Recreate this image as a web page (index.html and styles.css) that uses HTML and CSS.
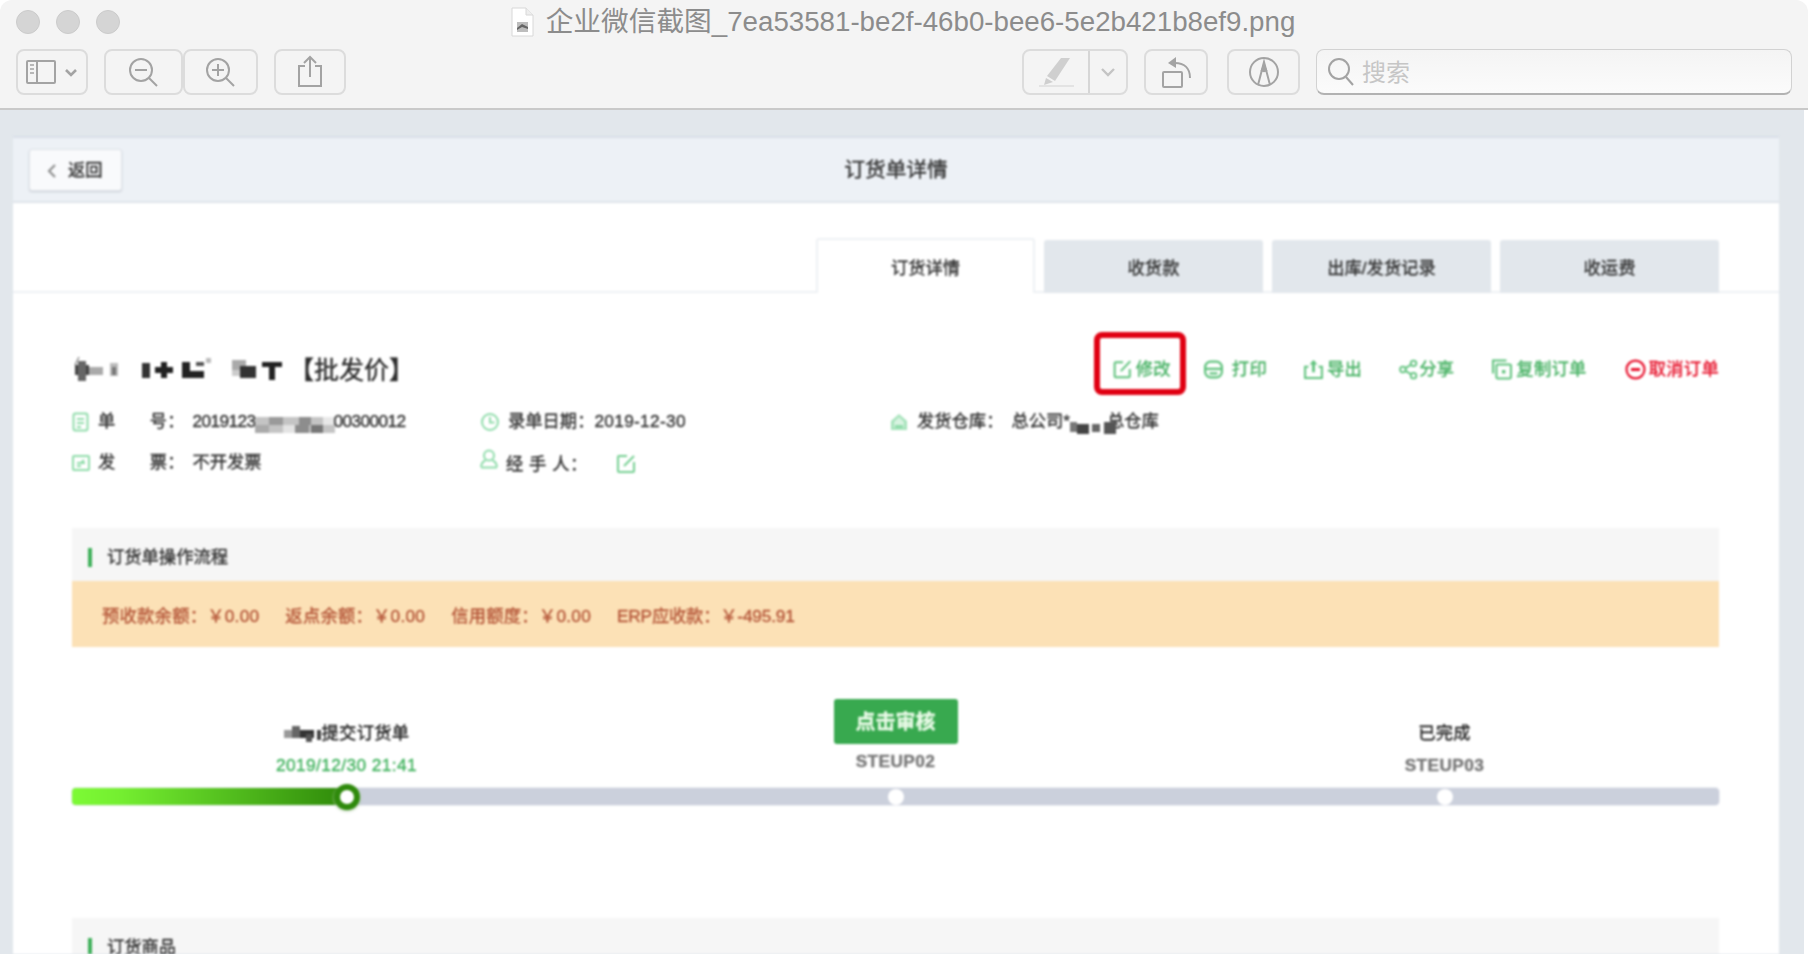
FILE: index.html
```html
<!DOCTYPE html>
<html lang="zh-CN">
<head>
<meta charset="utf-8">
<title>订货单详情</title>
<link rel="stylesheet" href="styles.css">
</head>
<body>
<div class="window">
  <header class="titlebar">
    <div class="title-row">
      <div class="lights"><i class="light"></i><i class="light"></i><i class="light"></i></div>
      <div class="doc-title">
        <svg class="doc-icon" width="23" height="30" viewBox="0 0 23 30"><path d="M1 1h14l7 7v21H1z" fill="#fff" stroke="#d8d8d8"/><path d="M15 1v7h7" fill="#eee" stroke="#d8d8d8"/><path d="M6 15h11v10H6z" fill="#bdbdbd"/><path d="M6 21l5-4 6 3v2l-6-2-5 3z" fill="#666"/></svg>
        <span>企业微信截图_7ea53581-be2f-46b0-bee6-5e2b421b8ef9.png</span>
      </div>
      <div></div>
    </div>
    <div class="toolbar">
      <div class="tb-btn w72">
        <svg width="62" height="46" viewBox="0 0 62 46" fill="none" stroke="#a3a3a3" stroke-width="2"><rect x="6" y="12" width="28" height="22" rx="1"/><path d="M16 12v22"/><path d="M9 16h4M9 20h4M9 24h4" stroke-width="1.5"/><path d="M45 21l5 5 5-5" stroke-width="2.6"/></svg>
      </div>
      <div class="tb-zoom">
        <div class="tb-btn w79">
          <svg width="40" height="40" viewBox="0 0 40 40" fill="none" stroke="#a3a3a3" stroke-width="2"><circle cx="17" cy="18" r="11"/><path d="M11 18h12M25 26l8 8"/></svg>
        </div>
        <div class="tb-btn w75">
          <svg width="40" height="40" viewBox="0 0 40 40" fill="none" stroke="#a3a3a3" stroke-width="2"><circle cx="17" cy="18" r="11"/><path d="M11 18h12M17 12v12M25 26l8 8"/></svg>
        </div>
      </div>
      <div class="tb-btn w72">
        <svg width="30" height="34" viewBox="0 0 30 34" fill="none" stroke="#a3a3a3" stroke-width="2"><path d="M10 11H4v20h22V11h-6"/><path d="M15 22V2M9 8l6-6 6 6"/></svg>
      </div>
      <div class="tb-right">
        <div class="tb-btn tb-pen">
          <span class="pen-main">
            <svg width="40" height="36" viewBox="0 0 40 36"><path d="M25 4h9L19 27l-8-5z" fill="#cfcfcf"/><path d="M10 24l7 4-9 3z" fill="#cfcfcf"/><rect x="3" y="31" width="35" height="2" fill="#e3e3e3"/></svg>
          </span>
          <span class="pen-arrow">
            <svg width="18" height="12" viewBox="0 0 18 12" fill="none" stroke="#c4c4c4" stroke-width="2.4"><path d="M3 3l6 6 6-6"/></svg>
          </span>
        </div>
        <div class="tb-btn w64">
          <svg width="34" height="36" viewBox="0 0 34 36" fill="none" stroke="#a3a3a3" stroke-width="2"><rect x="4" y="18" width="19" height="15" rx="1"/><path d="M31 24c0-10-6-15-15-15"/><path d="M17 3l-8 6 8 5z" fill="#a3a3a3" stroke="none"/></svg>
        </div>
        <div class="tb-btn w73">
          <svg width="34" height="34" viewBox="0 0 34 34" fill="none" stroke="#a3a3a3" stroke-width="2"><circle cx="17" cy="17" r="14"/><path d="M11 30l6-23 6 23"/><path d="M13.500 16l3.500-9 3.500 9c-2 1.500-5 1.500-7 0z" fill="#a3a3a3" stroke="none"/></svg>
        </div>
        <div class="search">
          <svg width="30" height="34" viewBox="0 0 30 34" fill="none" stroke="#a3a3a3" stroke-width="2"><circle cx="13" cy="14" r="10"/><path d="M20 22l7 8"/></svg>
          <span>搜索</span>
        </div>
      </div>
    </div>
  </header>

  <main class="content">
    <div class="panel">
      <div class="panel-head">
        <div><button class="back"><svg width="10" height="16" viewBox="0 0 10 16" fill="none" stroke="#8a8a8a" stroke-width="2"><path d="M8 2L2 8l6 6"/></svg><span>返回</span></button></div>
        <h1 class="panel-title">订货单详情</h1>
        <div></div>
      </div>

      <nav class="tabs">
        <a class="tab active">订货详情</a>
        <a class="tab">收货款</a>
        <a class="tab">出库/发货记录</a>
        <a class="tab">收运费</a>
      </nav>

      <div class="body">
        <div class="order-head">
          <h2 class="customer">
            <svg class="mosaic-title" width="217" height="26" viewBox="0 0 217 26">
              <path d="M3 8L7 0" stroke="#555" fill="none"/><rect x="3" y="8" width="14" height="10" fill="#444"/><rect x="6" y="4" width="8" height="20" fill="#666"/><rect x="17" y="10" width="14" height="8" fill="#aaa"/>
              <rect x="38" y="6" width="8" height="13" fill="#bbb"/><rect x="40" y="10" width="4" height="8" fill="#777"/>
              <rect x="70" y="6" width="8" height="15" fill="#333"/>
              <rect x="83" y="10" width="18" height="6" fill="#222"/><rect x="89" y="5" width="6" height="16" fill="#222"/>
              <rect x="110" y="5" width="8" height="16" fill="#222"/><rect x="118" y="14" width="14" height="7" fill="#222"/><rect x="124" y="5" width="8" height="4" fill="#555"/>
              <rect x="134" y="1" width="5" height="5" fill="#bbb"/>
              <rect x="160" y="3" width="14" height="10" fill="#aaa"/><rect x="168" y="9" width="16" height="12" fill="#333"/><rect x="160" y="13" width="8" height="6" fill="#ccc"/>
              <rect x="190" y="5" width="20" height="5" fill="#222"/><rect x="197" y="5" width="6" height="18" fill="#222"/>
            </svg>
            <span>【批发价】</span>
          </h2>
          <div class="actions">
            <a class="action edit">
              <svg class="ico" width="19" height="19" viewBox="0 0 19 19" fill="none" stroke="#5fc27c" stroke-width="1.8"><path d="M10 3H3.500a1 1 0 0 0-1 1v11.500a1 1 0 0 0 1 1H15a1 1 0 0 0 1-1V9"/><path d="M8 11l8.500-9"/></svg>
              <span>修改</span><i class="annot"></i>
            </a>
            <a class="action print">
              <svg class="ico" width="19" height="19" viewBox="0 0 19 19" fill="none" stroke="#5fc27c" stroke-width="2"><rect x="2" y="2.500" width="15" height="14" rx="5"/><path d="M2 9h15M6 13h7"/></svg>
              <span>打印</span>
            </a>
            <a class="action">
              <svg class="ico" width="19" height="19" viewBox="0 0 19 19" fill="none" stroke="#5fc27c" stroke-width="1.800"><path d="M5 7H2v10h15V7h-3"/><path d="M9.500 12V2" stroke-width="2.500"/><path d="M6 5l3.500-4 3.500 4z" fill="#5fc27c" stroke="none"/></svg>
              <span>导出</span>
            </a>
            <a class="action share">
              <svg class="ico" width="17" height="19" viewBox="0 0 17 19" fill="none" stroke="#5fc27c" stroke-width="1.600"><circle cx="3.500" cy="9.500" r="2.500"/><circle cx="13" cy="4" r="2.500"/><circle cx="13" cy="15" r="2.500"/><path d="M5.500 8.500L11 5M5.500 10.500L11 14"/></svg>
              <span>分享</span>
            </a>
            <a class="action copy">
              <svg class="ico" width="20" height="19" viewBox="0 0 20 19" fill="none" stroke="#5fc27c" stroke-width="1.800"><path d="M2 13V1.500h12"/><rect x="5" y="5" width="13" height="12.500" rx="1"/><rect x="10" y="10" width="3" height="3" fill="#5fc27c" stroke="none"/></svg>
              <span>复制订单</span>
            </a>
            <a class="action danger">
              <svg class="ico" width="19" height="19" viewBox="0 0 19 19" fill="none" stroke="#e8112d" stroke-width="2"><circle cx="9.500" cy="9.500" r="8"/><path d="M5.500 9.500h8" stroke-width="2.600"/></svg>
              <span>取消订单</span>
            </a>
          </div>
        </div>

        <div class="info">
          <div class="info-item">
            <svg class="info-ico" width="18" height="20" viewBox="0 0 18 20" fill="none" stroke="#8fdcaa" stroke-width="2"><rect x="1.500" y="1.500" width="14" height="17" rx="2"/><path d="M5 7h7M5 11h7M5 15h4"/></svg>
            <span class="label gap">单　　号：</span>
            <span class="value tight">2019123<svg class="mosaic-num" width="80" height="16" viewBox="0 0 80 16"><rect width="80" height="16" fill="#c4c4c4"/><rect x="0" y="8" width="14" height="8" fill="#aaa"/><rect x="14" y="0" width="14" height="8" fill="#9a9a9a"/><rect x="28" y="8" width="12" height="8" fill="#e4e4e4"/><rect x="40" y="8" width="14" height="8" fill="#8d8d8d"/><rect x="44" y="0" width="12" height="8" fill="#8d8d8d"/><rect x="56" y="8" width="12" height="8" fill="#777"/><rect x="68" y="0" width="12" height="8" fill="#e8e8e8"/></svg>00300012</span>
          </div>
          <div class="info-item">
            <svg class="info-ico" width="20" height="20" viewBox="0 0 20 20" fill="none" stroke="#8fdcaa" stroke-width="2"><circle cx="10" cy="10" r="8"/><path d="M10 5v5.500h4.500"/></svg>
            <span class="label">录单日期：</span>
            <span class="value date">2019-12-30</span>
          </div>
          <div class="info-item">
            <svg class="info-ico" width="20" height="20" viewBox="0 0 20 20"><path d="M10 2l8 7v9H2V9z" fill="#a6e3bb"/><path d="M10 5l5 5v6H5v-6z" fill="#d8f3e1"/><path d="M6 13h8v3H6z" fill="#8fdcaa"/></svg>
            <span class="label gap">发货仓库：</span>
            <span class="value">总公司*<svg class="mosaic-wh" width="48" height="18" viewBox="0 0 48 18"><rect x="0" y="6" width="7" height="10" fill="#777"/><rect x="7" y="8" width="12" height="10" fill="#444"/><rect x="22" y="8" width="8" height="8" fill="#666"/><rect x="34" y="6" width="12" height="12" fill="#555"/></svg>总仓库</span>
          </div>
          <div class="info-item">
            <svg class="info-ico" width="18" height="20" viewBox="0 0 18 20" fill="none" stroke="#8fdcaa" stroke-width="2"><rect x="1" y="3" width="16" height="14" rx="1"/><path d="M5 10h8M5 13h4M12 7l-3 3"/></svg>
            <span class="label gap">发　　票：</span>
            <span class="value">不开发票</span>
          </div>
          <div class="info-item">
            <svg class="info-ico lifted" width="18" height="20" viewBox="0 0 18 20" fill="none" stroke="#8fdcaa" stroke-width="2"><path d="M1 18c.5-4 3-6 4.500-6.500M17 18c-.5-4-3-6-4.500-6.500"/><circle cx="9" cy="6.500" r="5"/><path d="M1 18.500h16"/></svg>
            <span class="label wide">经 手 人：</span>
            <svg class="handler-edit" width="20" height="20" viewBox="0 0 20 20" fill="none" stroke="#74cf91" stroke-width="2"><path d="M11 2H3a1 1 0 0 0-1 1v14a1 1 0 0 0 1 1h14a1 1 0 0 0 1-1V8"/><path d="M8 12l10-10"/></svg>
          </div>
          <div></div>
        </div>

        <section class="section-head"><i class="tick"></i>订货单操作流程</section>
        <div class="balances">
          <span>预收款余额：￥0.00</span>
          <span>返点余额：￥0.00</span>
          <span>信用额度：￥0.00</span>
          <span class="erp">ERP应收款：￥-495.91</span>
        </div>

        <div class="steps">
          <div class="step">
            <div class="step-name"><svg class="mosaic-step" width="38" height="18" viewBox="0 0 38 18"><rect x="0" y="6" width="10" height="8" fill="#999"/><rect x="8" y="2" width="8" height="12" fill="#666"/><rect x="16" y="6" width="14" height="8" fill="#333"/><rect x="22" y="10" width="6" height="8" fill="#555"/><rect x="33" y="6" width="4" height="10" fill="#444"/></svg>提交订货单</div>
            <div class="step-date">2019/12/30 21:41</div>
          </div>
          <div class="step middle">
            <button class="audit">点击审核</button>
            <div class="step-code">STEUP02</div>
          </div>
          <div class="step">
            <div class="step-name">已完成</div>
            <div class="step-code">STEUP03</div>
          </div>
        </div>
        <div class="track">
          <div class="fill"></div>
          <div class="node"><i class="thumb"></i></div>
          <div class="node"><i class="dot"></i></div>
          <div class="node"><i class="dot"></i></div>
        </div>

        <section class="section-head goods"><i class="tick"></i>订货商品</section>
      </div>
    </div>
  </main>
</div>
</body>
</html>
```
FILE: styles.css
```css
* { box-sizing: border-box; }
html, body { margin: 0; height: 100%; background: #fff; overflow: hidden; }
body { font-family: "Liberation Sans", "Noto Sans CJK SC", sans-serif; color: #333; }
.window { width: 1808px; height: 954px; overflow: hidden; display: flex; flex-direction: column; }

.titlebar { flex: none; height: 110px; background: #f4f4f4; border-bottom: 2px solid #c9c9c9; border-radius: 12px 12px 0 0; }
.title-row { height: 44px; display: grid; grid-template-columns: 1fr auto 1fr; align-items: center; padding-left: 16px; }
.lights { display: flex; gap: 16px; }
.light { width: 24px; height: 24px; border-radius: 50%; background: #d5d5d5; border: 1px solid #cbcbcb; }
.doc-title { display: flex; align-items: center; gap: 12px; padding-right: 18px; font-size: 27.700px; line-height: 40px; color: #8c8c8c; }
.doc-icon { flex: none; }
.toolbar { display: flex; height: 46px; margin-top: 5px; padding: 0 16px; gap: 16px; }
.tb-btn { height: 46px; display: flex; align-items: center; justify-content: center; border: 2px solid #dcdcdc; border-radius: 8px; background: #f4f4f4; }
.w72 { width: 72px; }
.w79 { width: 79px; }
.w75 { width: 75px; }
.w64 { width: 64px; margin-right: 3px; }
.w73 { width: 73px; }
.tb-zoom { display: flex; }
.tb-right { margin-left: auto; display: flex; gap: 16px; }
.tb-pen { width: 106px; justify-content: flex-start; }
.pen-main { width: 66px; height: 42px; display: flex; align-items: center; justify-content: center; border-right: 2px solid #d6d6d6; }
.pen-arrow { flex: 1; display: flex; justify-content: center; }
.search { width: 476px; height: 46px; display: flex; align-items: center; gap: 6px; padding-left: 9px; border: 1px solid #d2d2d2; border-bottom: 2px solid #b2b2b2; border-radius: 8px; background: linear-gradient(#f4f4f4, #fbfbfb); font-size: 24px; color: #c6c6c6; }
.search span { margin-top: -2px; }

.content { flex: 1; min-height: 0; margin-right: 4px; background: #e2e7ec; padding: 26px 25px 0 13px; }
.panel { height: 100%; background: #fff; filter: blur(0.8px); overflow: hidden; font-size: 17.300px; line-height: 1.2; -webkit-text-stroke: 0.35px; }
.panel-head { height: 67px; display: grid; grid-template-columns: 1fr auto 1fr; align-items: center; padding: 0 16px; background: #edf1f6; border-top: 2px solid #d9dfe8; border-bottom: 2px solid #dfe4ea; }
.back { width: 93px; height: 42px; display: flex; align-items: center; gap: 11px; padding: 2px 0 0 17px; background: #f9fafc; border: 1px solid #dfe3e8; box-shadow: 0 1px 2px #c9ced6; border-radius: 3px; font: inherit; color: #333; }
.panel-title { margin: 0; padding-top: 2px; font-size: 20.700px; font-weight: 400; color: #333; }

.tabs { height: 90px; display: flex; justify-content: flex-end; align-items: flex-end; gap: 9px; padding-right: 60px; border-bottom: 2px solid #eef1f4; }
.tab { width: 219px; height: 53px; margin-bottom: -2px; padding-top: 3px; display: flex; align-items: center; justify-content: center; background: #e2e7ec; border-radius: 3px 3px 0 0; color: #333; }
.tab.active { background: #fff; border: 2px solid #eef1f4; border-bottom: 0; height: 55px; padding-top: 3px; }

.body { padding: 0 60px 0 59px; }
.order-head { display: flex; justify-content: space-between; align-items: center; height: 42px; margin-top: 55px; }
.customer { margin: 1px 0 0; display: flex; align-items: center; font-size: 25px; font-weight: 400; color: #2c2c2c; }
.mosaic-title { flex: none; }
.actions { display: flex; gap: 37px; color: #45b162; letter-spacing: 0.3px; }
.action { position: relative; display: flex; align-items: center; gap: 4px; }
.action.print { gap: 9px; margin-left: -4px; }
.action.share { gap: 2px; margin-left: 1px; }
.action.copy { margin-left: 1px; }
.action.danger { color: #e60f28; margin-left: 2px; }
.ico { flex: none; transform: scale(1.12); }
.annot { position: absolute; left: -19px; right: -15px; top: -27px; bottom: -16px; border: 6px solid #e00012; border-radius: 8px; }

.info { display: grid; grid-template-columns: 408px 409px 1fr; grid-auto-rows: 41px; margin-top: 11px; }
.info-item { display: flex; align-items: center; }
.info-ico { flex: none; margin-right: 8px; }
.info-ico.lifted { margin-top: -8px; }
.label { color: #333; white-space: pre; }
.label.gap { margin-right: 8px; }
.label.wide { margin-top: 4px; letter-spacing: 0.5px; }
.value { margin-left: 0; display: flex; align-items: center; color: #333; }
.value.tight { letter-spacing: -0.6px; }
.value.date { letter-spacing: 0.3px; }
.mosaic-num { margin: 6px -1px 0; }
.mosaic-wh { position: relative; z-index: 1; margin: 6px -11px 0 0; }
.handler-edit { margin: 3px 0 0 28px; }

.section-head { height: 53px; margin-top: 45px; display: flex; align-items: center; gap: 15px; padding: 5px 0 0 16px; background: #f6f6f6; color: #333; }
.tick { width: 4px; height: 19px; background: #3fb05a; }
.balances { height: 66px; display: flex; align-items: center; gap: 26px; padding: 4px 0 0 30px; background: #fce1b6; color: #b5573a; letter-spacing: 0.25px; }
.balances .erp { letter-spacing: -0.2px; }

.steps { display: grid; grid-template-columns: repeat(3, 1fr); height: 81px; margin-top: 52px; }
.step { display: flex; flex-direction: column; align-items: center; justify-content: flex-end; }
.step.middle { justify-content: flex-start; }
.step-name { height: 30px; margin-bottom: 2px; display: flex; align-items: center; gap: 0; color: #222; letter-spacing: 0.3px; }
.step-date { height: 30px; display: flex; align-items: center; color: #3fb25c; letter-spacing: 0.4px; }
.step-code { height: 30px; display: flex; align-items: center; font-weight: 700; color: #777; letter-spacing: 0.4px; }
.middle .step-code { margin-top: 2px; }
.audit { width: 124px; height: 45px; padding: 0; border: 0; border-radius: 3px; background: #38a94f; color: #eafbe8; font: inherit; font-size: 20px; font-weight: 700; }

.track { position: relative; display: grid; grid-template-columns: repeat(3, 1fr); height: 17px; margin-top: 8px; background: #cbd0dc; border-radius: 4px; box-shadow: 0 0 0 1px #eceef3; }
.fill { position: absolute; left: 0; top: 0; bottom: 0; width: 274px; border-radius: 4px 0 0 4px; background: linear-gradient(90deg, #7dfa35 0, #74ee30 18%, #2f8a0a 100%); }
.node { position: relative; display: flex; align-items: center; justify-content: center; height: 17px; }
.thumb { width: 26px; height: 26px; flex: none; border-radius: 50%; background: #fff; border: 6px solid #2f8a0c; box-shadow: 0 1px 3px #aac79f; }
.dot { width: 16px; height: 16px; flex: none; border-radius: 50%; background: #fff; }

.section-head.goods { margin-top: 113px; }
```
